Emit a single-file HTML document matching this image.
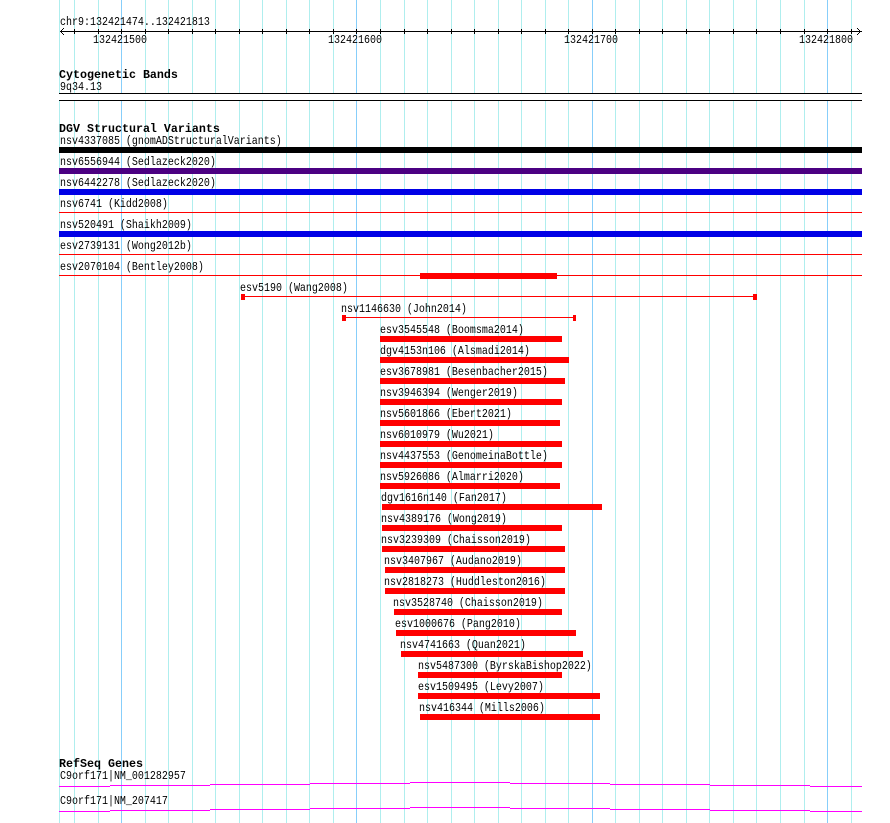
<!DOCTYPE html>
<html><head><meta charset="utf-8"><title>chr9:132421474..132421813</title>
<style>
html,body{margin:0;padding:0;background:#fff;width:890px;height:823px;overflow:hidden}
svg{display:block}
text{font-family:"Liberation Mono","DejaVu Sans Mono",monospace;font-size:12px;fill:#000;white-space:pre}
text.b{font-size:11.67px;font-weight:bold}
</style></head><body>
<svg width="890" height="823" viewBox="0 0 890 823" xmlns="http://www.w3.org/2000/svg">
<rect width="890" height="823" fill="#fff"/>
<g shape-rendering="crispEdges">
<path fill="none" stroke="#afeeee" d="M59.5 0V823M74.5 0V823M98.5 0V823M145.5 0V823M168.5 0V823M192.5 0V823M215.5 0V823M239.5 0V823M262.5 0V823M286.5 0V823M309.5 0V823M333.5 0V823M380.5 0V823M404.5 0V823M427.5 0V823M451.5 0V823M474.5 0V823M498.5 0V823M521.5 0V823M545.5 0V823M568.5 0V823M615.5 0V823M639.5 0V823M662.5 0V823M686.5 0V823M709.5 0V823M733.5 0V823M756.5 0V823M780.5 0V823M804.5 0V823M851.5 0V823"/>
<path fill="none" stroke="#87cefa" d="M121.5 0V823M356.5 0V823M592.5 0V823M827.5 0V823"/>
<rect x="59" y="93" width="803" height="8" fill="#fff"/>
<path fill="none" stroke="#000" d="M60 31.5H862M74.5 29V34M98.5 29V34M121.5 29V34M145.5 29V34M168.5 29V34M192.5 29V34M215.5 29V34M239.5 29V34M262.5 29V34M286.5 29V34M309.5 29V34M333.5 29V34M356.5 29V34M380.5 29V34M404.5 29V34M427.5 29V34M451.5 29V34M474.5 29V34M498.5 29V34M521.5 29V34M545.5 29V34M568.5 29V34M592.5 29V34M615.5 29V34M639.5 29V34M662.5 29V34M686.5 29V34M709.5 29V34M733.5 29V34M756.5 29V34M780.5 29V34M804.5 29V34M827.5 29V34M851.5 29V34"/>
<g fill="#000">
<rect x="61" y="30" width="1" height="1"/><rect x="62" y="29" width="1" height="1"/><rect x="63" y="28" width="1" height="1"/>
<rect x="61" y="32" width="1" height="1"/><rect x="62" y="33" width="1" height="1"/><rect x="63" y="34" width="1" height="1"/>
<rect x="859" y="30" width="1" height="1"/><rect x="858" y="29" width="1" height="1"/><rect x="857" y="28" width="1" height="1"/>
<rect x="859" y="32" width="1" height="1"/><rect x="858" y="33" width="1" height="1"/><rect x="857" y="34" width="1" height="1"/>
</g>
<rect x="59" y="93" width="803" height="1" fill="#000"/>
<rect x="59" y="100" width="803" height="1" fill="#000"/>
<rect x="59" y="147" width="803" height="6" fill="#000"/>
<rect x="59" y="168" width="803" height="6" fill="#4b0082"/>
<rect x="59" y="189" width="803" height="6" fill="#0000e6"/>
<rect x="59" y="231" width="803" height="6" fill="#0000e6"/>
<g fill="#f00">
<rect x="59" y="212" width="803" height="1"/>
<rect x="59" y="254" width="803" height="1"/>
<rect x="59" y="275" width="803" height="1"/>
<rect x="420" y="273" width="137" height="6"/>
<rect x="241" y="296" width="516" height="1"/>
<rect x="241" y="294" width="4" height="6"/>
<rect x="753" y="294" width="4" height="6"/>
<rect x="342" y="317" width="234" height="1"/>
<rect x="342" y="315" width="4" height="6"/>
<rect x="573" y="315" width="3" height="6"/>
<rect x="380" y="336" width="182" height="6"/>
<rect x="380" y="357" width="189" height="6"/>
<rect x="380" y="378" width="185" height="6"/>
<rect x="380" y="399" width="182" height="6"/>
<rect x="380" y="420" width="180" height="6"/>
<rect x="380" y="441" width="182" height="6"/>
<rect x="380" y="462" width="182" height="6"/>
<rect x="380" y="483" width="180" height="6"/>
<rect x="382" y="504" width="220" height="6"/>
<rect x="382" y="525" width="180" height="6"/>
<rect x="382" y="546" width="183" height="6"/>
<rect x="385" y="567" width="180" height="6"/>
<rect x="385" y="588" width="180" height="6"/>
<rect x="394" y="609" width="168" height="6"/>
<rect x="396" y="630" width="180" height="6"/>
<rect x="401" y="651" width="182" height="6"/>
<rect x="418" y="672" width="144" height="6"/>
<rect x="418" y="693" width="182" height="6"/>
<rect x="420" y="714" width="180" height="6"/>
</g>
<g fill="#f0f">
<rect x="59" y="786" width="51" height="1"/><rect x="110" y="785" width="100" height="1"/><rect x="210" y="784" width="100" height="1"/><rect x="310" y="783" width="100" height="1"/><rect x="410" y="782" width="100" height="1"/><rect x="510" y="783" width="100" height="1"/><rect x="610" y="784" width="100" height="1"/><rect x="710" y="785" width="100" height="1"/><rect x="810" y="786" width="52" height="1"/>
<rect x="59" y="811" width="51" height="1"/><rect x="110" y="810" width="100" height="1"/><rect x="210" y="809" width="100" height="1"/><rect x="310" y="808" width="100" height="1"/><rect x="410" y="807" width="100" height="1"/><rect x="510" y="808" width="100" height="1"/><rect x="610" y="809" width="100" height="1"/><rect x="710" y="810" width="100" height="1"/><rect x="810" y="811" width="52" height="1"/>
</g>
</g>
<text transform="matrix(.8333 0 0 1 60 25)">chr9:132421474..132421813</text>
<text transform="matrix(.8333 0 0 1 93 43)">132421500</text>
<text transform="matrix(.8333 0 0 1 328 43)">132421600</text>
<text transform="matrix(.8333 0 0 1 564 43)">132421700</text>
<text transform="matrix(.8333 0 0 1 799 43)">132421800</text>
<text class="b" x="59" y="78">Cytogenetic Bands</text>
<text transform="matrix(.8333 0 0 1 60 90)">9q34.13</text>
<text class="b" x="59" y="132">DGV Structural Variants</text>
<text transform="matrix(.8333 0 0 1 60 144)">nsv4337085 (gnomADStructuralVariants)</text>
<text transform="matrix(.8333 0 0 1 60 165)">nsv6556944 (Sedlazeck2020)</text>
<text transform="matrix(.8333 0 0 1 60 186)">nsv6442278 (Sedlazeck2020)</text>
<text transform="matrix(.8333 0 0 1 60 207)">nsv6741 (Kidd2008)</text>
<text transform="matrix(.8333 0 0 1 60 228)">nsv520491 (Shaikh2009)</text>
<text transform="matrix(.8333 0 0 1 60 249)">esv2739131 (Wong2012b)</text>
<text transform="matrix(.8333 0 0 1 60 270)">esv2070104 (Bentley2008)</text>
<text transform="matrix(.8333 0 0 1 240 291)">esv5190 (Wang2008)</text>
<text transform="matrix(.8333 0 0 1 341 312)">nsv1146630 (John2014)</text>
<text transform="matrix(.8333 0 0 1 380 333)">esv3545548 (Boomsma2014)</text>
<text transform="matrix(.8333 0 0 1 380 354)">dgv4153n106 (Alsmadi2014)</text>
<text transform="matrix(.8333 0 0 1 380 375)">esv3678981 (Besenbacher2015)</text>
<text transform="matrix(.8333 0 0 1 380 396)">nsv3946394 (Wenger2019)</text>
<text transform="matrix(.8333 0 0 1 380 417)">nsv5601866 (Ebert2021)</text>
<text transform="matrix(.8333 0 0 1 380 438)">nsv6010979 (Wu2021)</text>
<text transform="matrix(.8333 0 0 1 380 459)">nsv4437553 (GenomeinaBottle)</text>
<text transform="matrix(.8333 0 0 1 380 480)">nsv5926086 (Almarri2020)</text>
<text transform="matrix(.8333 0 0 1 381 501)">dgv1616n140 (Fan2017)</text>
<text transform="matrix(.8333 0 0 1 381 522)">nsv4389176 (Wong2019)</text>
<text transform="matrix(.8333 0 0 1 381 543)">nsv3239309 (Chaisson2019)</text>
<text transform="matrix(.8333 0 0 1 384 564)">nsv3407967 (Audano2019)</text>
<text transform="matrix(.8333 0 0 1 384 585)">nsv2818273 (Huddleston2016)</text>
<text transform="matrix(.8333 0 0 1 393 606)">nsv3528740 (Chaisson2019)</text>
<text transform="matrix(.8333 0 0 1 395 627)">esv1000676 (Pang2010)</text>
<text transform="matrix(.8333 0 0 1 400 648)">nsv4741663 (Quan2021)</text>
<text transform="matrix(.8333 0 0 1 418 669)">nsv5487300 (ByrskaBishop2022)</text>
<text transform="matrix(.8333 0 0 1 418 690)">esv1509495 (Levy2007)</text>
<text transform="matrix(.8333 0 0 1 419 711)">nsv416344 (Mills2006)</text>
<text class="b" x="59" y="767">RefSeq Genes</text>
<text transform="matrix(.8333 0 0 1 60 779)">C9orf171|NM_001282957</text>
<text transform="matrix(.8333 0 0 1 60 804)">C9orf171|NM_207417</text>
</svg>
</body></html>
